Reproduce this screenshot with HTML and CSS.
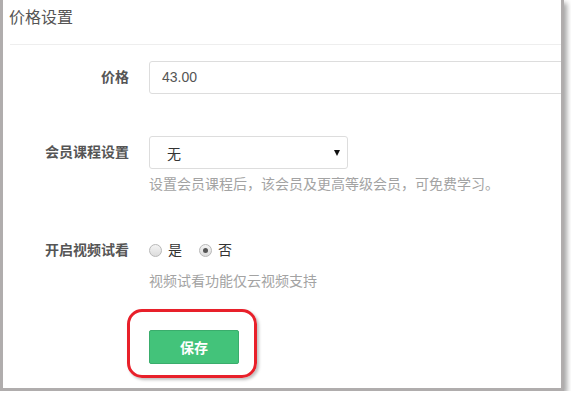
FILE: index.html
```html
<!DOCTYPE html>
<html lang="zh">
<head>
<meta charset="utf-8">
<link rel="stylesheet" href="styles.css">
</head>
<body>
<div class="frame">
  <div class="title">价格设置</div>
  <div class="divider"></div>
  <div class="form">
    <div class="row row-price">
      <div class="label">价格</div>
      <div class="control">
        <div class="input">43.00</div>
      </div>
    </div>
    <div class="row row-member">
      <div class="label">会员课程设置</div>
      <div class="control">
        <div class="select"><span>无</span><span class="caret"></span></div>
        <div class="help">设置会员课程后，该会员及更高等级会员，可免费学习。</div>
      </div>
    </div>
    <div class="row row-video">
      <div class="label">开启视频试看</div>
      <div class="control">
        <div class="radios">
          <span class="radio"><span class="dot"></span>是</span>
          <span class="radio"><span class="dot checked"></span>否</span>
        </div>
        <div class="help help2">视频试看功能仅云视频支持</div>
      </div>
    </div>
    <div class="row row-save">
      <div class="label"></div>
      <div class="control">
        <div class="save-wrap">
          <button class="btn">保存</button>
          <div class="mark"></div>
        </div>
      </div>
    </div>
  </div>
</div>
</body>
</html>
```
FILE: styles.css
```css
html, body {
  margin: 0;
  padding: 0;
  background: #fff;
}
body {
  font-family: "Liberation Sans", "Noto Sans CJK SC", sans-serif;
  color: #333;
}
.frame {
  width: 558px;
  height: 388px;
  border: 3px solid #b0adad;
  border-top: none;
  box-shadow: 3px 3px 5px rgba(0,0,0,0.35);
  overflow: hidden;
  position: relative;
  background: #fff;
}
.title {
  padding: 8px 0 0 6px;
  height: 36px;
  font-size: 16px;
  line-height: 20px;
  color: #555;
}
.divider {
  margin-left: 7px;
  height: 1px;
  background: #eee;
}
.form {
  padding-top: 16px;
}
.row {
  display: flex;
  gap: 20px;
}
.label {
  width: 126px;
  flex: none;
  text-align: right;
  font-size: 14px;
  font-weight: bold;
  color: #555;
}
.control {
  flex: 1;
  min-width: 0;
}
.row-price .label { line-height: 33px; }
.input {
  height: 31px;
  width: 440px;
  border: 1px solid #ddd;
  border-radius: 3px;
  padding-left: 12px;
  font-size: 14px;
  line-height: 31px;
  color: #555;
}
.row-member { margin-top: 42px; }
.row-member .label { line-height: 33px; }
.select {
  width: 199px;
  box-sizing: border-box;
  height: 33px;
  border: 1px solid #ddd;
  border-radius: 3px;
  padding: 0 7px 0 17px;
  display: flex;
  align-items: center;
  justify-content: space-between;
  font-size: 14px;
  color: #333;
}
.caret {
  width: 0;
  height: 0;
  border-left: 3.5px solid transparent;
  border-right: 3.5px solid transparent;
  border-top: 6px solid #111;
}
.help {
  margin-top: 6px;
  font-size: 14px;
  line-height: 18px;
  color: #a3a3a3;
}
.row-video { margin-top: 47px; }
.row-video .label { line-height: 20px; }
.radios {
  display: flex;
  gap: 17px;
  font-size: 14px;
  line-height: 20px;
  color: #333;
}
.radio {
  display: flex;
  align-items: center;
  gap: 6px;
}
.dot {
  width: 11px;
  height: 11px;
  border-radius: 50%;
  border: 1px solid #b8b8b8;
  background: linear-gradient(#f4f4f4, #dcdcdc);
  position: relative;
}
.dot.checked::after {
  content: "";
  position: absolute;
  left: 3px;
  top: 3px;
  width: 5px;
  height: 5px;
  border-radius: 50%;
  background: #555;
}
.help2 { margin-top: 12px; }
.row-save { margin-top: 40px; }
.save-wrap {
  position: relative;
  width: 90px;
}
.btn {
  width: 90px;
  height: 34px;
  border: 1px solid #3aad6c;
  border-radius: 2px;
  background: #43c37a;
  color: #fff;
  font-family: "Liberation Sans", "Noto Sans CJK SC", sans-serif;
  font-size: 14px;
  font-weight: bold;
  padding: 0;
}
.mark {
  position: absolute;
  left: -22px;
  top: -21px;
  width: 124px;
  height: 63px;
  border: 3px solid #e8202a;
  border-radius: 15px;
  box-shadow: 2px 2px 3px rgba(0,0,0,0.25);
}
```
